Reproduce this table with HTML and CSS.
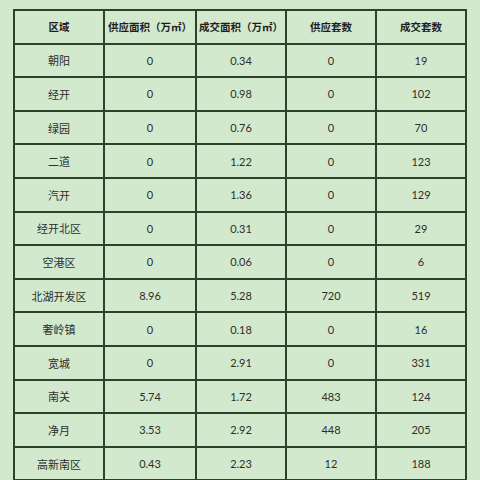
FILE: index.html
```html
<!DOCTYPE html>
<html lang="zh">
<head>
<meta charset="utf-8">
<link rel="stylesheet" href="styles.css">
</head>
<body>
<table class="data">
<colgroup>
<col class="c1"><col class="c2"><col class="c3"><col class="c4"><col class="c5">
</colgroup>
<thead>
<tr><th>区域</th><th>供应面积（万㎡）</th><th>成交面积（万㎡）</th><th>供应套数</th><th>成交套数</th></tr>
</thead>
<tbody>
<tr><td>朝阳</td><td>0</td><td>0.34</td><td>0</td><td>19</td></tr>
<tr><td>经开</td><td>0</td><td>0.98</td><td>0</td><td>102</td></tr>
<tr><td>绿园</td><td>0</td><td>0.76</td><td>0</td><td>70</td></tr>
<tr><td>二道</td><td>0</td><td>1.22</td><td>0</td><td>123</td></tr>
<tr><td>汽开</td><td>0</td><td>1.36</td><td>0</td><td>129</td></tr>
<tr><td>经开北区</td><td>0</td><td>0.31</td><td>0</td><td>29</td></tr>
<tr><td>空港区</td><td>0</td><td>0.06</td><td>0</td><td>6</td></tr>
<tr><td>北湖开发区</td><td>8.96</td><td>5.28</td><td>720</td><td>519</td></tr>
<tr><td>奢岭镇</td><td>0</td><td>0.18</td><td>0</td><td>16</td></tr>
<tr><td>宽城</td><td>0</td><td>2.91</td><td>0</td><td>331</td></tr>
<tr><td>南关</td><td>5.74</td><td>1.72</td><td>483</td><td>124</td></tr>
<tr><td>净月</td><td>3.53</td><td>2.92</td><td>448</td><td>205</td></tr>
<tr><td>高新南区</td><td>0.43</td><td>2.23</td><td>12</td><td>188</td></tr>
</tbody>
</table>
</body>
</html>
```
FILE: styles.css
```css
html, body {
  margin: 0;
  padding: 0;
  background: #d2e9cd;
  overflow: hidden;
  height: 480px;
}
body {
  padding: 9px 0 0 13px;
  box-sizing: border-box;
}
.data {
  border-collapse: collapse;
  table-layout: fixed;
  width: 452px;
  font-family: Lato, "Noto Sans CJK SC", sans-serif;
  font-size: 11px;
  color: #2e2e2e;
}
.c1 { width: 90px; }
.c2 { width: 92px; }
.c3 { width: 90px; }
.c4 { width: 90px; }
.c5 { width: 90px; }
.data th, .data td {
  border: 2px solid #2b432b;
  height: 31.6px;
  padding: 0;
  text-align: center;
  vertical-align: middle;
}
.data th {
  font-weight: bold;
  color: #1e1e1e;
  font-size: 10.5px;
}
```
